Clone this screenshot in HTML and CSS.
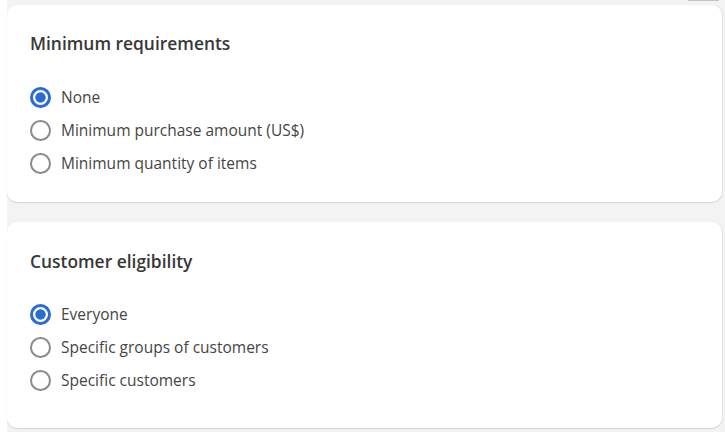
FILE: index.html
```html
<!DOCTYPE html>
<html>
<head>
<meta charset="utf-8">
<link rel="stylesheet" href="styles.css">
</head>
<body>
<div class="page">
  <div class="topbar"><div class="tab-edge"></div></div>
  <section class="card card-first">
    <h2 class="card-title">Minimum requirements</h2>
    <div class="options">
      <label class="option"><span class="radio checked"></span><span class="label">None</span></label>
      <label class="option"><span class="radio"></span><span class="label">Minimum purchase amount (US$)</span></label>
      <label class="option"><span class="radio"></span><span class="label">Minimum quantity of items</span></label>
    </div>
  </section>
  <section class="card card-second">
    <h2 class="card-title">Customer eligibility</h2>
    <div class="options">
      <label class="option"><span class="radio checked"></span><span class="label">Everyone</span></label>
      <label class="option"><span class="radio"></span><span class="label">Specific groups of customers</span></label>
      <label class="option"><span class="radio"></span><span class="label">Specific customers</span></label>
    </div>
  </section>
</div>
</body>
</html>
```
FILE: styles.css
```css
* { box-sizing: border-box; }
html, body { margin: 0; padding: 0; background: #ffffff; }
body {
  font-family: "Open Sans", "Noto Sans", "Liberation Sans", sans-serif;
  color: #303030;
  width: 725px;
  height: 432px;
  overflow: hidden;
}
.page {
  margin-left: 7px;
  background: #f3f3f3;
  padding: 0 3px 5px 0;
  display: flex;
  flex-direction: column;
  min-height: 432px;
}
.topbar {
  height: 5px;
  display: flex;
  justify-content: flex-end;
  padding-right: 3px;
}
.tab-edge {
  width: 31px;
  height: 1px;
  background: #c4c4c4;
}
.card {
  background: #ffffff;
  border-radius: 10px;
  box-shadow: 0 1px 1px rgba(0,0,0,0.12), 1px 0 1px rgba(0,0,0,0.06);
  padding: 28px 22px 0 23px;
}
.card-first { height: 197px; padding-top: 27px; }
.card-first .options { margin-top: 33px; }
.card-second { height: 206px; margin-top: 20px; }
.card-title {
  margin: 0;
  font-size: 17.4px;
  font-weight: 600;
  line-height: 22px;
  color: #383838;
}
.options {
  margin-top: 32px;
  display: flex;
  flex-direction: column;
  gap: 12px;
}
.option {
  display: flex;
  align-items: center;
  gap: 10px;
  height: 21px;
  font-size: 15.5px;
  color: #454545;
}
.radio {
  width: 21px;
  height: 21px;
  border-radius: 50%;
  border: 2px solid #8a8a8a;
  flex: 0 0 auto;
}
.radio.checked {
  border: 3px solid #2a6bd6;
  background: radial-gradient(circle, #2a6bd6 0 4.8px, #ffffff 5.5px);
}
.label { line-height: 21px; }
```
